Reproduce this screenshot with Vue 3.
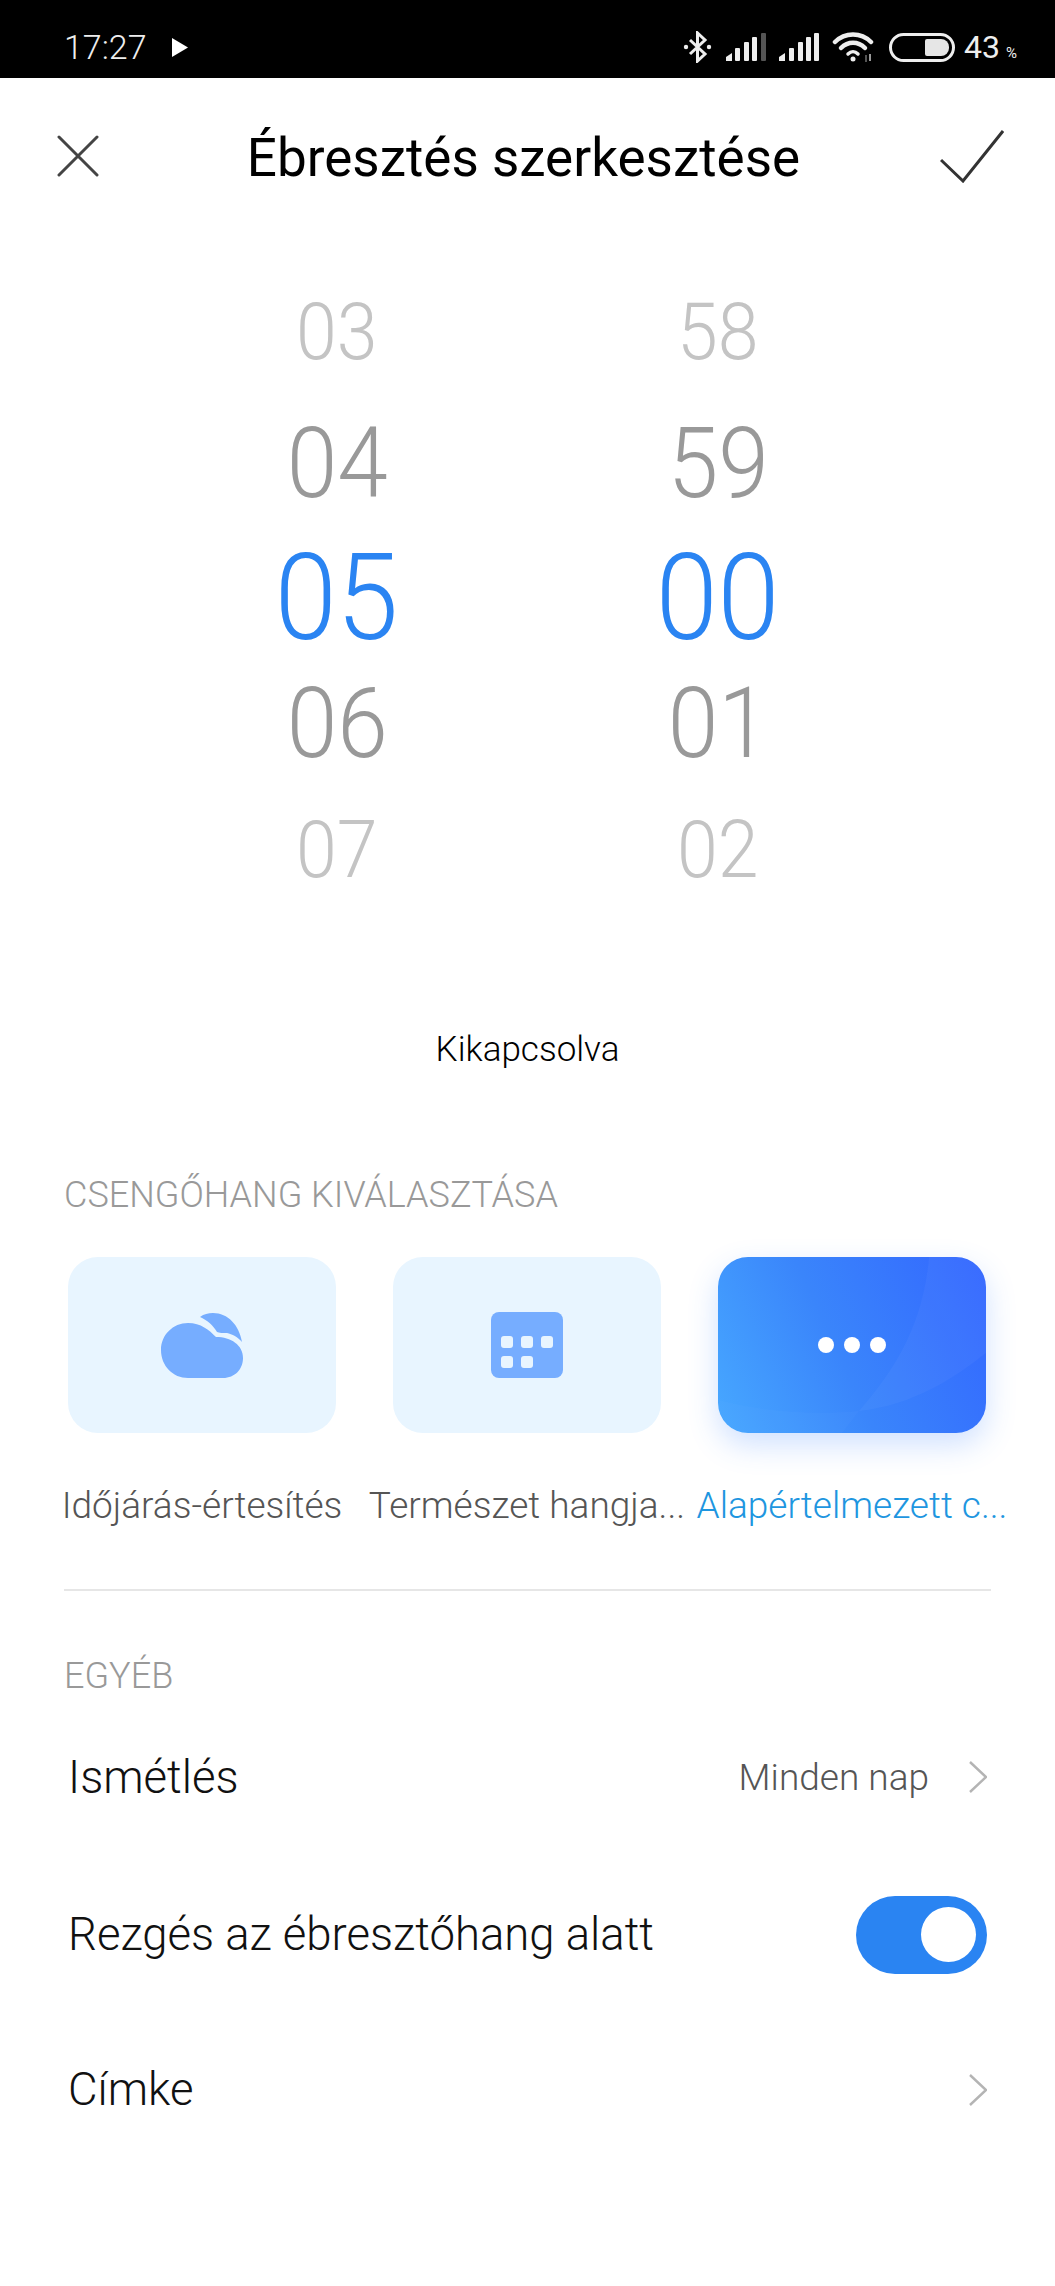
<template>
  <div class="screen">
    <div class="statusbar">
      <div class="status-left">
        <span class="clock">17:27</span>
        <svg class="play" viewBox="0 0 16 19"><path d="M0 0L16 9.5L0 19Z" fill="#fff" /></svg>
      </div>
      <div class="status-right">
        <svg class="bt" viewBox="0 0 29 32" fill="none" stroke="#eee" stroke-width="3">
          <path d="M7 9L22 23L14.500 30V2L22 9L7 23" />
          <circle cx="3" cy="16" r="2.200" fill="#eee" stroke="none" />
          <circle cx="26" cy="16" r="2.200" fill="#eee" stroke="none" />
        </svg>
        <svg class="signal" viewBox="0 0 40 28">
          <path d="M0 28V24L6 20V28Z" fill="#eee" />
          <rect x="9" y="15" width="5" height="13" rx="1" fill="#eee" />
          <rect x="18" y="9" width="5" height="19" rx="1" fill="#eee" />
          <rect x="26" y="4" width="5" height="24" rx="1" fill="#eee" />
          <rect x="35" y="0" width="5" height="28" rx="1" fill="#555" />
        </svg>
        <svg class="signal" viewBox="0 0 40 28">
          <path d="M0 28V24L6 20V28Z" fill="#eee" />
          <rect x="10" y="15" width="5" height="13" rx="1" fill="#eee" />
          <rect x="19" y="9" width="5" height="19" rx="1" fill="#eee" />
          <rect x="27" y="4" width="5" height="24" rx="1" fill="#eee" />
          <rect x="35" y="0" width="5" height="28" rx="1" fill="#eee" />
        </svg>
        <svg class="wifi" viewBox="0 0 42 30" fill="none" stroke="#eee" stroke-width="4.500" stroke-linecap="round">
          <path d="M3 10C13 0 29 0 39 10" />
          <path d="M9 16C16 9 26 9 33 16" />
          <path d="M16 22C19 19 23 19 26 22" stroke-width="3.500" />
          <circle cx="21" cy="27" r="2.500" fill="#eee" stroke="none" />
          <path d="M34 23V30" stroke="#555" stroke-width="2" stroke-linecap="butt" />
          <path d="M38 22V29" stroke="#999" stroke-width="2" stroke-linecap="butt" />
        </svg>
        <div class="battery"><span class="battery-fill"></span></div>
        <span class="percent">43<small>%</small></span>
      </div>
    </div>

    <header class="titlebar">
      <svg class="close" viewBox="0 0 42 42" fill="none" stroke="#444" stroke-width="3" stroke-linecap="round">
        <path d="M2 2L40 40M40 2L2 40" />
      </svg>
      <h1>Ébresztés szerkesztése</h1>
      <svg class="check" viewBox="0 0 64 53" fill="none" stroke="#333" stroke-width="3">
        <path d="M1 30L23 51L63 1" />
      </svg>
    </header>

    <div class="picker">
      <div v-for="(col, i) in columns" :key="i" class="wheel">
        <span v-for="(n, j) in col" :key="j" class="num" :class="'pos' + j">{{ n }}</span>
      </div>
    </div>

    <div class="state">Kikapcsolva</div>

    <div class="section-head ring-head">CSENGŐHANG KIVÁLASZTÁSA</div>
    <div class="tones">
      <div class="tone">
        <div class="tone-card">
          <svg class="tone-icon" viewBox="0 0 82 65">
            <path d="M39 4C43 1 47 0 52 0C67 0 78 12 81 29C77 24 71 21 66 20C62 20 58 20 56 19C52 12 46 7 39 4Z" fill="#76adff" />
            <path d="M27 10C40 10 48 17 55 24C70 24 82 32 82 45C82 56 74 65 62 65H27C12 65 0 53 0 37C0 22 12 10 27 10Z" fill="#76adff" />
          </svg>
        </div>
        <span class="tone-name">Időjárás-értesítés</span>
      </div>
      <div class="tone">
        <div class="tone-card">
          <div class="keypad">
            <i v-for="k in 5" :key="k"></i>
          </div>
        </div>
        <span class="tone-name">Természet hangja...</span>
      </div>
      <div class="tone active">
        <div class="tone-card">
          <svg class="swoosh" viewBox="0 0 268 176" preserveAspectRatio="none">
            <path d="M211 0C205 70 175 115 141 154C195 148 235 122 268 96V0Z" fill="#fff" opacity="0.035" />
            <path d="M0 143C50 156 100 158 141 154L124 176H0Z" fill="#fff" opacity="0.02" />
          </svg>
          <div class="dots"><i></i><i></i><i></i></div>
        </div>
        <span class="tone-name">Alapértelmezett c...</span>
      </div>
    </div>

    <div class="divider"></div>

    <div class="section-head other-head">EGYÉB</div>
    <div class="row first">
      <span class="row-label">Ismétlés</span>
      <span class="row-value">Minden nap</span>
      <svg class="chevron" viewBox="0 0 18 32" fill="none" stroke="#b4b4b4" stroke-width="2.400"><path d="M1 1L17 16L1 31" /></svg>
    </div>
    <div class="row">
      <span class="row-label">Rezgés az ébresztőhang alatt</span>
      <div class="toggle"><span class="knob"></span></div>
    </div>
    <div class="row">
      <span class="row-label">Címke</span>
      <svg class="chevron" viewBox="0 0 18 32" fill="none" stroke="#b4b4b4" stroke-width="2.400"><path d="M1 1L17 16L1 31" /></svg>
    </div>
  </div>
</template>

<script setup>
const columns = [
  ["03", "04", "05", "06", "07"],
  ["58", "59", "00", "01", "02"],
];
</script>

<style scoped>
.screen {
  width: 1055px;
  height: 2286px;
  overflow: hidden;
  background: #fff;
  font-family: Roboto, "Noto Sans", sans-serif;
  color: #000;
}
.statusbar {
  height: 78px;
  background: #000;
  color: #eee;
  display: flex;
  justify-content: space-between;
  align-items: center;
  padding: 16px 38px 0 64px;
  box-sizing: border-box;
}
.status-left,
.status-right {
  display: flex;
  align-items: center;
}
.clock {
  font-size: 34px;
  font-weight: 300;
  width: 108px;
}
.play {
  width: 16px;
  height: 19px;
}
.bt {
  width: 29px;
  height: 32px;
  margin-right: 14px;
}
.signal {
  width: 40px;
  height: 28px;
  margin-right: 13px;
}
.wifi {
  width: 42px;
  height: 30px;
  margin-right: 15px;
}
.battery {
  width: 66px;
  height: 29px;
  box-sizing: border-box;
  border: 3px solid #eee;
  border-radius: 15px;
  display: flex;
  justify-content: flex-end;
  padding: 3px;
  margin-right: 9px;
}
.battery-fill {
  width: 24px;
  background: #e6e6e6;
  border-radius: 2px 8px 8px 2px;
}
.percent {
  font-size: 32px;
  font-weight: 400;
}
.percent small {
  font-size: 15px;
  margin-left: 6px;
}
.titlebar {
  height: 160px;
  display: flex;
  align-items: center;
  justify-content: space-between;
  padding: 0 51px 0 57px;
  box-sizing: border-box;
}
.titlebar h1 {
  margin: 0;
  font-size: 53px;
  font-weight: 400;
  position: relative;
  left: 4px;
}
.close {
  width: 42px;
  height: 42px;
  margin-top: -4px;
}
.check {
  width: 64px;
  height: 53px;
  margin-top: -4px;
}
.picker {
  display: flex;
  padding-left: 197px;
  gap: 101px;
  padding-top: 29px;
}
.wheel {
  width: 280px;
  display: flex;
  flex-direction: column;
  align-items: center;
}
.num {
  font-weight: 300;
  line-height: 1;
  display: flex;
  align-items: center;
  transform: scaleX(0.93);
}
.pos0,
.pos4 {
  font-size: 79px;
  color: #c4c4c4;
}
.pos1,
.pos3 {
  font-size: 98px;
  color: #999;
}
.pos2 {
  font-size: 120px;
  color: #2a84f2;
}
.pos0 {
  height: 130px;
}
.pos1 {
  height: 134px;
}
.pos2 {
  height: 133px;
}
.pos3 {
  height: 120px;
}
.pos4 {
  height: 132px;
}
.state {
  margin-top: 114px;
  text-align: center;
  font-size: 35px;
  font-weight: 300;
  line-height: 40px;
}
.section-head {
  color: #999;
  font-size: 36px;
  font-weight: 300;
  line-height: 40px;
  padding-left: 64px;
}
.ring-head {
  margin-top: 105px;
}
.tones {
  margin-top: 42px;
  padding-left: 68px;
  display: flex;
  gap: 57px;
}
.tone {
  width: 268px;
  display: flex;
  flex-direction: column;
  align-items: center;
}
.tone-card {
  width: 268px;
  height: 176px;
  flex: none;
  border-radius: 30px;
  background: #e8f5ff;
  display: flex;
  align-items: center;
  justify-content: center;
  position: relative;
}
.active .tone-card {
  background: linear-gradient(65deg, #47a8ff 0%, #3a85fb 45%, #3366ff 100%);
  box-shadow: 0 12px 30px rgba(60, 130, 255, 0.24);
}
.tone-icon {
  width: 82px;
  height: 65px;
}
.keypad {
  width: 72px;
  height: 66px;
  box-sizing: border-box;
  background: #76adff;
  border-radius: 8px;
  padding: 24px 10px 0;
  display: grid;
  grid-template-columns: repeat(3, 12px);
  grid-auto-rows: 12px;
  gap: 8px;
  justify-content: space-between;
}
.keypad i {
  background: #e8f5ff;
  border-radius: 3px;
}
.swoosh {
  position: absolute;
  inset: 0;
  width: 100%;
  height: 100%;
  border-radius: 30px;
}
.dots {
  display: flex;
  gap: 10px;
  position: relative;
}
.dots i {
  width: 16px;
  height: 16px;
  border-radius: 50%;
  background: #fff;
}
.tone-name {
  margin-top: 52px;
  font-size: 37px;
  font-weight: 300;
  line-height: 42px;
  white-space: nowrap;
  color: #555;
}
.active .tone-name {
  color: #1e96e0;
}
.divider {
  height: 2px;
  background: #e6e6e6;
  margin: 62px 64px 0;
}
.other-head {
  margin-top: 65px;
  margin-bottom: 1px;
}
.row {
  height: 155px;
  display: flex;
  align-items: center;
  padding: 0 68px;
}
.row.first {
  height: 160px;
}
.row-label {
  font-size: 45.500px;
  font-weight: 300;
  flex: 1;
  color: #111;
}
.row-value {
  font-size: 37px;
  font-weight: 300;
  color: #555;
  margin-right: 40px;
}
.chevron {
  width: 18px;
  height: 32px;
}
.toggle {
  width: 131px;
  height: 78px;
  border-radius: 39px;
  background: #2a84f2;
  display: flex;
  align-items: center;
  justify-content: flex-end;
  padding-right: 11px;
  box-sizing: border-box;
}
.knob {
  width: 55px;
  height: 55px;
  border-radius: 50%;
  background: #fff;
}
</style>

<style>
html,
body {
  background: #fff;
}
</style>
